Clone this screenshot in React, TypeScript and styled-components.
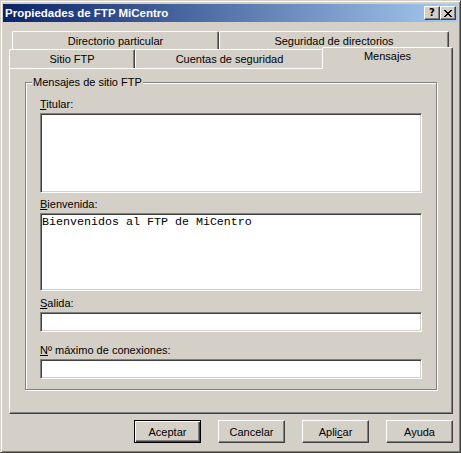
import React from "react";
import styled, { createGlobalStyle } from "styled-components";

const GlobalStyle = createGlobalStyle`
  html, body { margin: 0; padding: 0; background: #D4D0C8; }
  body { font-family: "Liberation Sans", Arial, sans-serif; font-size: 11px; color: #000; }
  * { box-sizing: border-box; }
`;

const Window = styled.div`
  width: 461px;
  height: 453px;
  background: #d4d0c8;
  border: 1px solid;
  border-color: #d4d0c8 #404040 #404040 #d4d0c8;
  box-shadow: inset 1px 1px 0 #ffffff, inset -1px -1px 0 #808080;
  padding: 3px 2px 2px 2px;
  display: flex;
  flex-direction: column;
  overflow: hidden;
`;

const TitleBar = styled.div`
  height: 18px;
  flex: none;
  display: flex;
  align-items: center;
  padding-left: 2px;
  background: linear-gradient(to right, #0a246a, #a6caf0);
`;

const TitleText = styled.span`
  font-family: "Liberation Sans", Arial, sans-serif;
  font-weight: bold;
  font-size: 11.5px;
  color: #ffffff;
  white-space: nowrap;
`;

const CaptionButtons = styled.div`
  margin-left: auto;
  margin-right: 2px;
  display: flex;
`;

const CaptionButton = styled.div`
  width: 16px;
  height: 14px;
  background: #d4d0c8;
  border: 1px solid;
  border-color: #ffffff #404040 #404040 #ffffff;
  box-shadow: inset -1px -1px 0 #808080;
  display: flex;
  align-items: center;
  justify-content: center;
  font-family: "DejaVu Sans", sans-serif;
  font-weight: bold;
  font-size: 10px;
  line-height: 10px;
  color: #000;
`;

const Body = styled.div`
  flex: 1;
  display: flex;
  flex-direction: column;
  padding: 9px 0 0 6px;
`;

const TabHeader = styled.div`
  width: 444px;
  display: flex;
  flex-direction: column;
`;

const TabRow = styled.div<{ $h: number; $indent: number }>`
  height: ${(p) => p.$h}px;
  padding-left: ${(p) => p.$indent}px;
  display: flex;
  align-items: flex-end;
`;

const Tab = styled.div<{ $w: number; $selected?: boolean }>`
  width: ${(p) => p.$w}px;
  height: ${(p) => (p.$selected ? "calc(100% + 3px)" : "100%")};
  margin-top: ${(p) => (p.$selected ? "-2px" : "0")};
  margin-bottom: ${(p) => (p.$selected ? "-1px" : "0")};
  margin-left: ${(p) => (p.$selected ? "-2px" : "0")};
  align-self: flex-start;
  position: relative;
  z-index: ${(p) => (p.$selected ? 2 : 1)};
  background: #d4d0c8;
  border-top: 1px solid #ffffff;
  border-left: 1px solid #ffffff;
  border-right: 1px solid #404040;
  border-top-left-radius: 2px;
  border-top-right-radius: 2px;
  box-shadow: inset -1px 0 0 #808080;
  display: flex;
  justify-content: center;
  align-items: ${(p) => (p.$selected ? "flex-start" : "center")};
  padding-top: ${(p) => (p.$selected ? "2px" : "1px")};
  white-space: nowrap;
  font-size: 11px;
  line-height: 13px;
`;

const Panel = styled.div`
  width: 444px;
  height: 346px;
  border: 1px solid;
  border-color: #ffffff #404040 #404040 #ffffff;
  box-shadow: inset -1px -1px 0 #808080;
  padding: 7px 0 0 15px;
  position: relative;
  z-index: 1;
`;

const Group = styled.fieldset`
  width: 412px;
  margin: 0;
  padding: 0;
  border: 1px solid #808080;
  box-shadow: inset 1px 1px 0 #ffffff, 1px 1px 0 #ffffff;
  min-width: 0;
`;

const Legend = styled.legend`
  margin-left: 6px;
  padding: 0 1px;
  line-height: 13px;
  font-size: 11px;
  background: #d4d0c8;
`;

const GroupBody = styled.div`
  padding: 9px 14px 10px 14px;
  display: flex;
  flex-direction: column;
`;

const FieldLabel = styled.label<{ $mt?: number }>`
  display: block;
  height: 13px;
  line-height: 13px;
  font-size: 11px;
  margin-top: ${(p) => p.$mt ?? 0}px;
  margin-bottom: 2px;
  white-space: nowrap;
`;

const sunken = `
  display: block;
  width: 100%;
  margin: 0;
  background: #ffffff;
  border: 1px solid;
  border-color: #808080 #ffffff #ffffff #808080;
  box-shadow: inset 1px 1px 0 #404040, inset -1px -1px 0 #d4d0c8;
  outline: none;
  border-radius: 0;
  font-family: "Liberation Mono", "Courier New", monospace;
  font-size: 11.67px;
  color: #000;
`;

const MultiEdit = styled.textarea<{ $h: number }>`
  ${sunken}
  height: ${(p) => p.$h}px;
  resize: none;
  overflow: hidden;
  line-height: 14px;
  padding: 1px 0 0 1px;
`;

const LineEdit = styled.input`
  ${sunken}
  height: 20px;
  padding: 0 1px;
`;

const ButtonRow = styled.div`
  width: 444px;
  margin-top: 6px;
  display: flex;
  justify-content: flex-end;
  gap: 17px;
`;

const Button = styled.button<{ $default?: boolean }>`
  width: 67px;
  height: 23px;
  padding: 0;
  margin: 0;
  background: #d4d0c8;
  font-family: "Liberation Sans", Arial, sans-serif;
  font-size: 11px;
  color: #000;
  border-radius: 0;
  border: 1px solid;
  border-color: ${(p) => (p.$default ? "#000000" : "#ffffff #404040 #404040 #ffffff")};
  box-shadow: ${(p) =>
    p.$default
      ? "inset 1px 1px 0 #ffffff, inset -1px -1px 0 #404040, inset -2px -2px 0 #808080"
      : "inset -1px -1px 0 #808080"};
`;

const xPixels = [
  [0, 0], [1, 0], [6, 0], [7, 0],
  [1, 1], [2, 1], [5, 1], [6, 1],
  [2, 2], [3, 2], [4, 2], [5, 2],
  [3, 3], [4, 3],
  [2, 4], [3, 4], [4, 4], [5, 4],
  [1, 5], [2, 5], [5, 5], [6, 5],
  [0, 6], [1, 6], [6, 6], [7, 6],
];

const CloseGlyph = () => (
  <svg width="8" height="7" viewBox="0 0 8 7" shapeRendering="crispEdges">
    {xPixels.map(([x, y]) => (
      <rect key={`${x}-${y}`} x={x} y={y} width="1" height="1" fill="#000" />
    ))}
  </svg>
);

export default function App() {
  return (
    <>
      <GlobalStyle />
      <Window>
        <TitleBar>
          <TitleText>Propiedades de FTP MiCentro</TitleText>
          <CaptionButtons>
            <CaptionButton>?</CaptionButton>
            <CaptionButton>
              <CloseGlyph />
            </CaptionButton>
          </CaptionButtons>
        </TitleBar>
        <Body>
          <TabHeader>
            <TabRow $h={18} $indent={3}>
              <Tab $w={207}>Directorio particular</Tab>
              <Tab $w={230}>Seguridad de directorios</Tab>
            </TabRow>
            <TabRow $h={19} $indent={0}>
              <Tab $w={126}>Sitio FTP</Tab>
              <Tab $w={189}>Cuentas de seguridad</Tab>
              <Tab $w={131} $selected>
                Mensajes
              </Tab>
            </TabRow>
          </TabHeader>
          <Panel>
            <Group>
              <Legend>Mensajes de sitio FTP</Legend>
              <GroupBody>
                <FieldLabel>
                  <u>T</u>itular:
                </FieldLabel>
                <MultiEdit $h={80} defaultValue="" />
                <FieldLabel $mt={5}>
                  <u>B</u>ienvenida:
                </FieldLabel>
                <MultiEdit $h={78} defaultValue="Bienvenidos al FTP de MiCentro" />
                <FieldLabel $mt={6}>
                  <u>S</u>alida:
                </FieldLabel>
                <LineEdit defaultValue="" />
                <FieldLabel $mt={12}>
                  <u>N</u>º máximo de conexiones:
                </FieldLabel>
                <LineEdit defaultValue="" />
              </GroupBody>
            </Group>
          </Panel>
          <ButtonRow>
            <Button $default>Aceptar</Button>
            <Button>Cancelar</Button>
            <Button>
              Apli<u>c</u>ar
            </Button>
            <Button>Ayuda</Button>
          </ButtonRow>
        </Body>
      </Window>
    </>
  );
}
